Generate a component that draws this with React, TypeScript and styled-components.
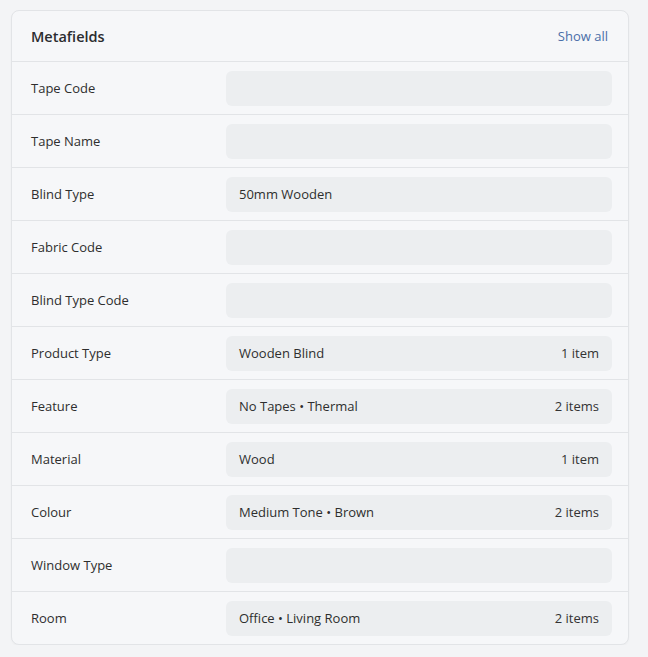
import { createGlobalStyle, styled } from "styled-components";

const GlobalStyle = createGlobalStyle`
  body {
    margin: 0;
    background: #f3f4f6;
    font-family: "Open Sans", "Noto Sans", sans-serif;
    color: #303030;
  }
`;

const Page = styled.div`
  padding: 10px 0 0 11px;
`;

const Card = styled.section`
  width: 618px;
  box-sizing: border-box;
  background: #f6f7f9;
  border: 1px solid #e2e4e7;
  border-radius: 8px;
  box-shadow: 0 1px 2px rgba(0, 0, 0, 0.03);
  overflow: hidden;
`;

const Header = styled.div`
  display: flex;
  align-items: center;
  justify-content: space-between;
  height: 50px;
  padding: 0 20px 0 19px;
  border-bottom: 1px solid #e2e4e7;
`;

const Title = styled.h2`
  margin: 0;
  font-size: 14.5px;
  font-weight: 600;
  color: #2b2c2f;
`;

const ShowAll = styled.a`
  font-size: 13px;
  color: #4a6ea8;
  text-decoration: none;
  cursor: pointer;
`;

const Row = styled.div`
  display: grid;
  grid-template-columns: 214px 1fr;
  align-items: center;
  height: 52px;
  padding: 0 16px 0 0;
  border-bottom: 1px solid #e2e4e7;

  &:last-child {
    border-bottom: 0;
  }
`;

const Label = styled.span`
  padding-left: 19px;
  font-size: 13px;
  color: #2e2e2e;
`;

const Field = styled.div`
  display: flex;
  align-items: center;
  justify-content: space-between;
  height: 35px;
  padding: 0 13px;
  background: #eceef0;
  border-radius: 6px;
  font-size: 13px;
  color: #2e2e2e;
`;

const Count = styled.span`
  color: #333;
`;

interface Metafield {
  label: string;
  values?: string[];
}

const fields: Metafield[] = [
  { label: "Tape Code" },
  { label: "Tape Name" },
  { label: "Blind Type", values: ["50mm Wooden"] },
  { label: "Fabric Code" },
  { label: "Blind Type Code" },
  { label: "Product Type", values: ["Wooden Blind"] },
  { label: "Feature", values: ["No Tapes", "Thermal"] },
  { label: "Material", values: ["Wood"] },
  { label: "Colour", values: ["Medium Tone", "Brown"] },
  { label: "Window Type" },
  { label: "Room", values: ["Office", "Living Room"] },
];

export default function App() {
  return (
    <Page>
      <GlobalStyle />
      <Card>
        <Header>
          <Title>Metafields</Title>
          <ShowAll>Show all</ShowAll>
        </Header>
        {fields.map((f) => (
          <Row key={f.label}>
            <Label>{f.label}</Label>
            <Field>
              {f.values ? <span>{f.values.join(" • ")}</span> : null}
              {f.values && f.label !== "Blind Type" ? (
                <Count>
                  {f.values.length} {f.values.length === 1 ? "item" : "items"}
                </Count>
              ) : null}
            </Field>
          </Row>
        ))}
      </Card>
    </Page>
  );
}
